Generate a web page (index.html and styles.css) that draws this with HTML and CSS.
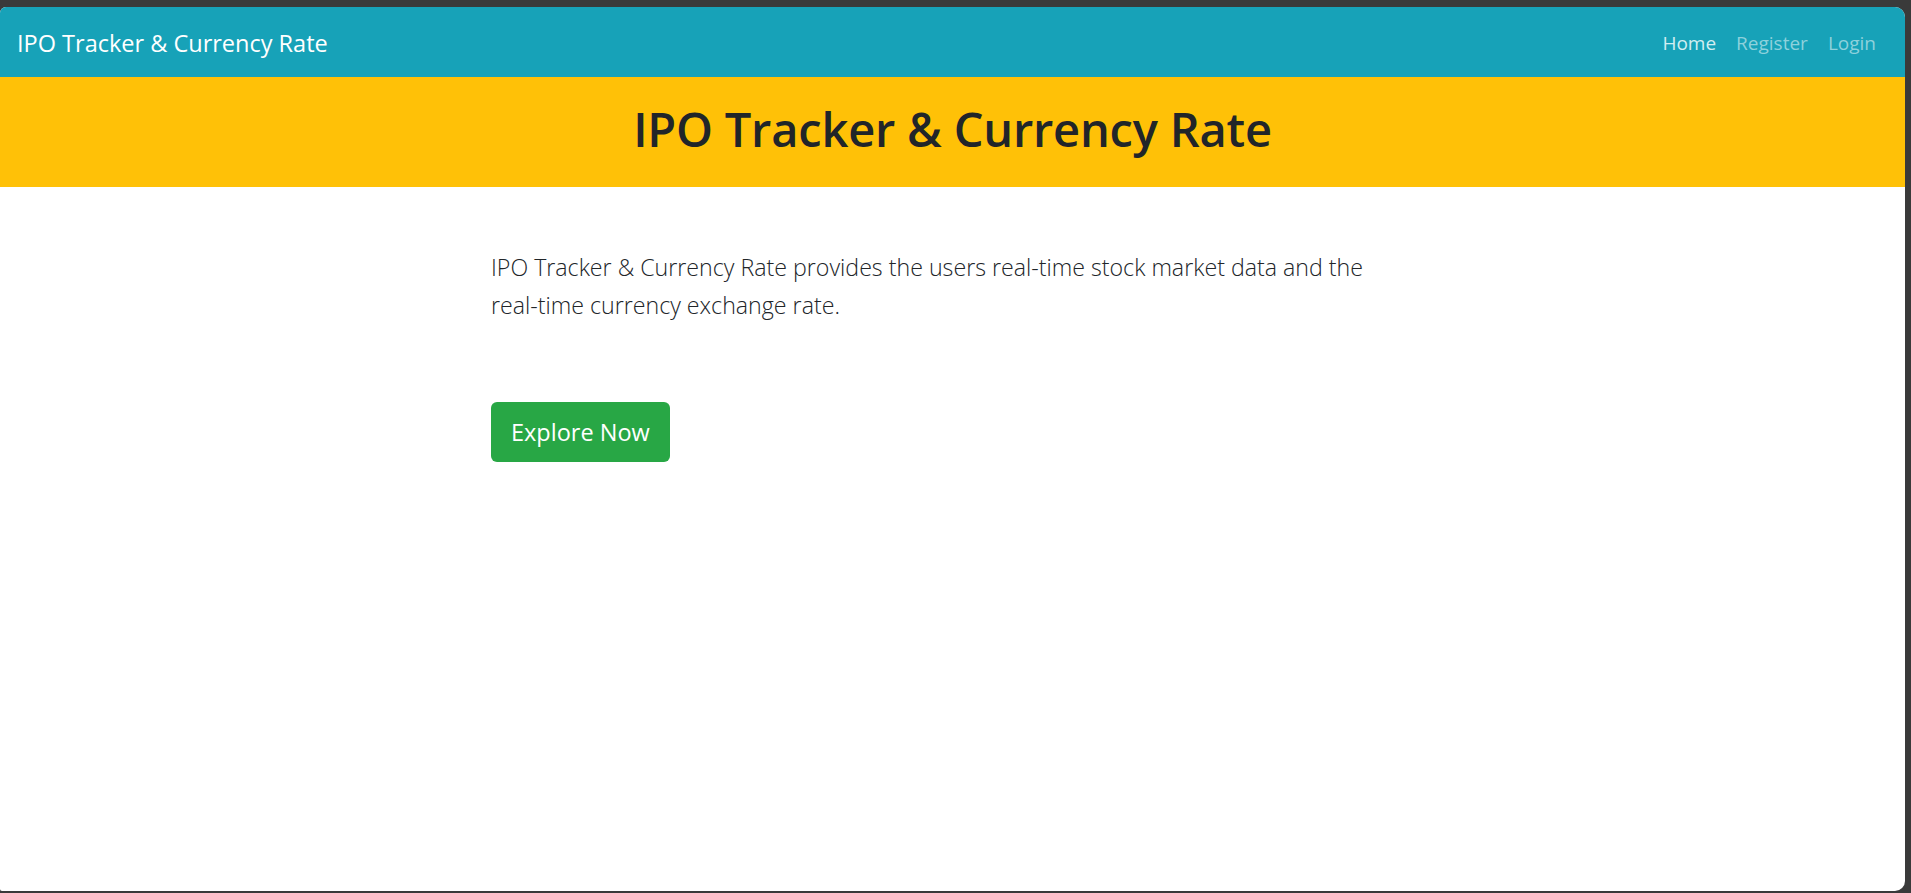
FILE: index.html
```html
<!DOCTYPE html>
<html lang="en">
<head>
<meta charset="utf-8">
<title>IPO Tracker &amp; Currency Rate</title>
<link rel="stylesheet" href="styles.css">
</head>
<body>
<div class="window">
  <nav class="navbar">
    <a class="brand" href="#">IPO Tracker &amp; Currency Rate</a>
    <ul class="nav">
      <li><a class="nav-link active" href="#">Home</a></li>
      <li><a class="nav-link" href="#">Register</a></li>
      <li><a class="nav-link" href="#">Login</a></li>
    </ul>
  </nav>
  <header class="jumbo">
    <h1 class="jumbo-title">IPO Tracker &amp; Currency Rate</h1>
  </header>
  <main class="content">
    <p class="lead">IPO Tracker &amp; Currency Rate provides the users real-time stock market data and the real-time currency exchange rate.</p>
    <a class="btn-explore" href="#">Explore Now</a>
  </main>
</div>
</body>
</html>
```
FILE: styles.css
```css
html, body {
  margin: 0;
  padding: 0;
  height: 100%;
}
body {
  background: #3a3a3a;
  font-family: "Open Sans", "Noto Sans", sans-serif;
  color: #212529;
  overflow: hidden;
}
.window {
  box-sizing: border-box;
  margin: 7px 6px 0 0;
  height: 884px;
  background: #fff;
  border-radius: 6px 10px 10px 2px;
  overflow: hidden;
  display: flex;
  flex-direction: column;
}
.navbar {
  box-sizing: border-box;
  height: 70px;
  flex: none;
  background: #17a2b8;
  display: flex;
  align-items: center;
  justify-content: space-between;
  padding: 3px 19px 0 17px;
}
.brand {
  color: #fff;
  text-decoration: none;
  font-size: 23.5px;
  line-height: 1;
}
.nav {
  list-style: none;
  margin: 0;
  padding: 0;
  display: flex;
}
.nav-link {
  display: block;
  padding: 0 10px;
  color: #8ed1dc;
  text-decoration: none;
  font-size: 19px;
  line-height: 1;
}
.nav-link.active {
  color: #d1eef2;
}
.jumbo {
  flex: none;
  height: 110px;
  background: #ffc107;
  display: flex;
  align-items: center;
  justify-content: center;
}
.jumbo-title {
  margin: 0;
  font-size: 47px;
  font-weight: 600;
  line-height: 1;
  letter-spacing: -0.2px;
  color: #212529;
  padding-bottom: 6px;
}
.content {
  width: 912px;
  padding: 62px 0 0 491px;
  display: flex;
  flex-direction: column;
  align-items: flex-start;
}
.lead {
  margin: 0;
  font-size: 23.2px;
  font-weight: 300;
  line-height: 37.5px;
  color: #212529;
}
.btn-explore {
  margin-top: 78px;
  display: block;
  background: #28a745;
  color: #fff;
  text-decoration: none;
  font-size: 23.5px;
  line-height: 60px;
  height: 60px;
  padding: 0 20px;
  border-radius: 6px;
}
```
